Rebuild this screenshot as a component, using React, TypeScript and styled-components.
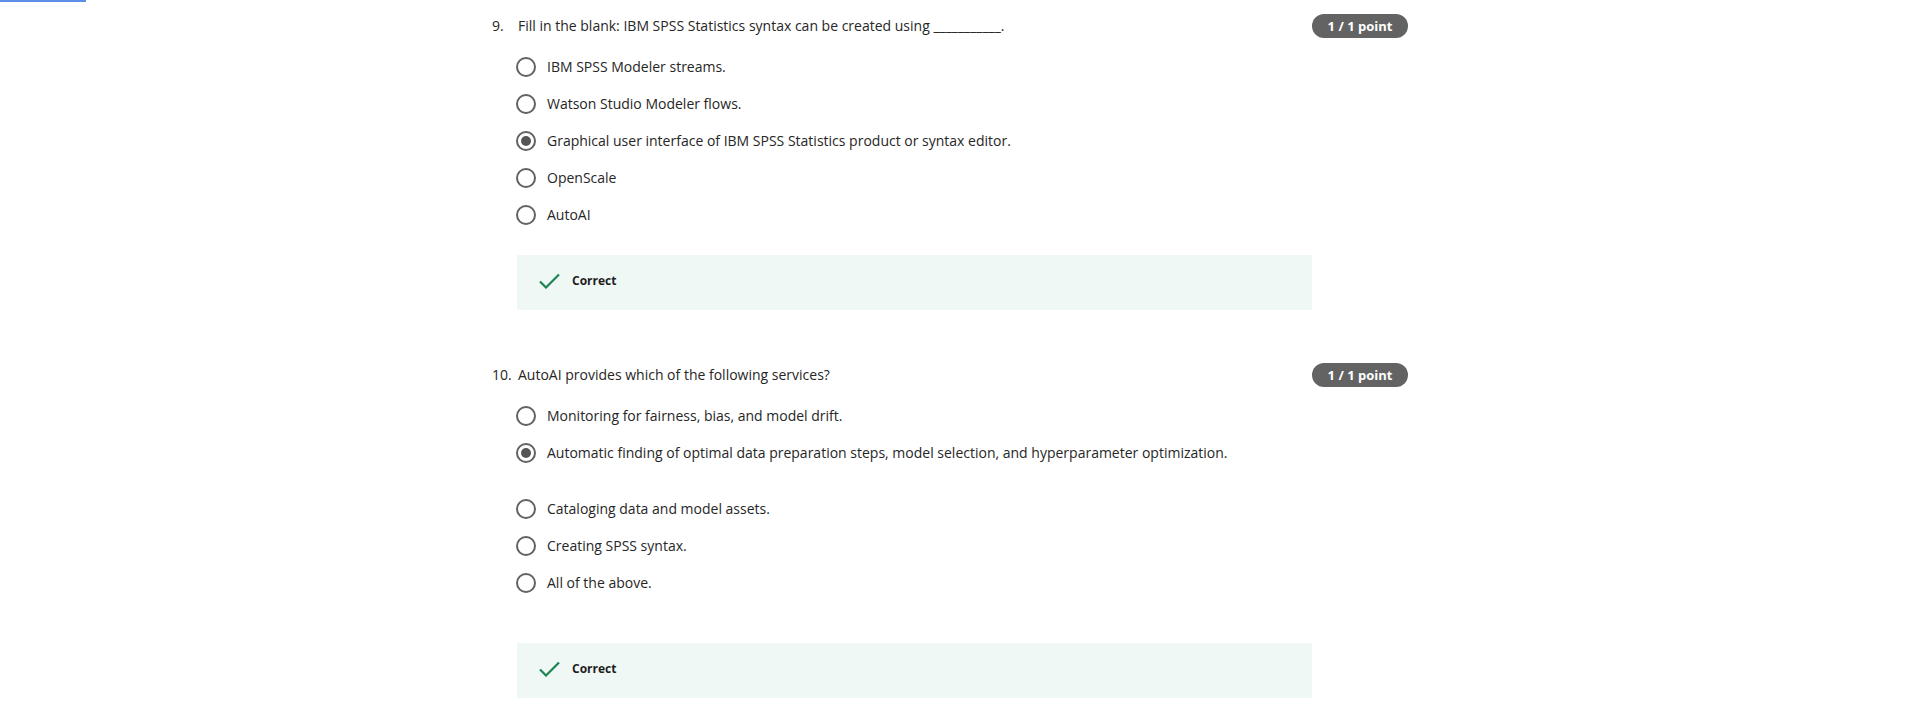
import React from 'react'
import styled, { createGlobalStyle } from 'styled-components'

const GlobalStyle = createGlobalStyle`
  body {
    margin: 0;
    background: #ffffff;
    font-family: 'Open Sans', 'Noto Sans', sans-serif;
    color: #1f1f1f;
  }
`

const questions = [
  {
    number: '9.',
    title: 'Fill in the blank: IBM SPSS Statistics syntax can be created using ___________.',
    options: [
      { text: 'IBM SPSS Modeler streams.' },
      { text: 'Watson Studio Modeler flows.' },
      { text: 'Graphical user interface of IBM SPSS Statistics product or syntax editor.', checked: true },
      { text: 'OpenScale' },
      { text: 'AutoAI' },
    ],
    feedbackGap: 22,
  },
  {
    number: '10.',
    title: 'AutoAI provides which of the following services?',
    options: [
      { text: 'Monitoring for fairness, bias, and model drift.' },
      {
        text: 'Automatic finding of optimal data preparation steps, model selection, and hyperparameter optimization.',
        checked: true,
        extra: 19,
      },
      { text: 'Cataloging data and model assets.' },
      { text: 'Creating SPSS syntax.' },
      { text: 'All of the above.' },
    ],
    feedbackGap: 42,
  },
]

export default function App() {
  return (
    <>
      <GlobalStyle />
      <ProgressLine />
      <Page>
        {questions.map((q) => (
          <Question key={q.number}>
            <Header>
              <Title>
                <Num>{q.number}</Num>
                <span>{q.title}</span>
              </Title>
              <Badge>1 / 1 point</Badge>
            </Header>
            <Options>
              {q.options.map((o) => (
                <Option key={o.text} $extra={o.extra ?? 0}>
                  <Radio $checked={!!o.checked} />
                  <OptionText>{o.text}</OptionText>
                </Option>
              ))}
            </Options>
            <Feedback $gap={q.feedbackGap}>
              <svg width="21" height="16" viewBox="0 0 21 16" fill="none">
                <path d="M1 8.5 L7 14.5 L20 1.5" stroke="#1f8354" strokeWidth="2.2" />
              </svg>
              <FeedbackText>Correct</FeedbackText>
            </Feedback>
          </Question>
        ))}
      </Page>
    </>
  )
}

const ProgressLine = styled.div`
  position: absolute;
  top: 0;
  left: 0;
  width: 86px;
  height: 2px;
  background: #5b8fe6;
`

const Page = styled.div`
  width: 916px;
  margin-left: 492px;
  padding-top: 14px;
`

const Question = styled.div`
  margin-bottom: 53px;
`

const Header = styled.div`
  display: flex;
  justify-content: space-between;
  align-items: center;
  height: 24px;
`

const Title = styled.div`
  display: flex;
  font-size: 14px;
  line-height: 20px;
  color: #262626;
`

const Num = styled.span`
  width: 26px;
  flex-shrink: 0;
`

const Badge = styled.div`
  width: 96px;
  height: 24px;
  border-radius: 12px;
  background: #636363;
  color: #ffffff;
  font-size: 13px;
  font-weight: 700;
  display: flex;
  align-items: center;
  justify-content: center;
`

const Options = styled.div`
  margin-top: 10px;
  padding-left: 24px;
  display: flex;
  flex-direction: column;
`

const Option = styled.div<{ $extra: number }>`
  display: flex;
  align-items: center;
  height: 37px;
  margin-bottom: ${(p) => p.$extra}px;
`

const Radio = styled.span<{ $checked: boolean }>`
  width: 20px;
  height: 20px;
  box-sizing: border-box;
  border-radius: 50%;
  border: 2px solid #626262;
  flex-shrink: 0;
  display: flex;
  align-items: center;
  justify-content: center;
  &::after {
    content: '';
    width: 10px;
    height: 10px;
    border-radius: 50%;
    background: #555555;
    display: ${(p) => (p.$checked ? 'block' : 'none')};
  }
`

const OptionText = styled.span`
  margin-left: 11px;
  font-size: 14px;
  line-height: 20px;
  color: #262626;
`

const Feedback = styled.div<{ $gap: number }>`
  margin-top: ${(p) => p.$gap}px;
  margin-left: 25px;
  width: 795px;
  height: 55px;
  box-sizing: border-box;
  background: #eff8f4;
  display: flex;
  align-items: center;
  padding-left: 22px;
  padding-bottom: 3px;
`

const FeedbackText = styled.span`
  margin-left: 12px;
  font-size: 12px;
  line-height: 16px;
  font-weight: 700;
  color: #1f1f1f;
`
